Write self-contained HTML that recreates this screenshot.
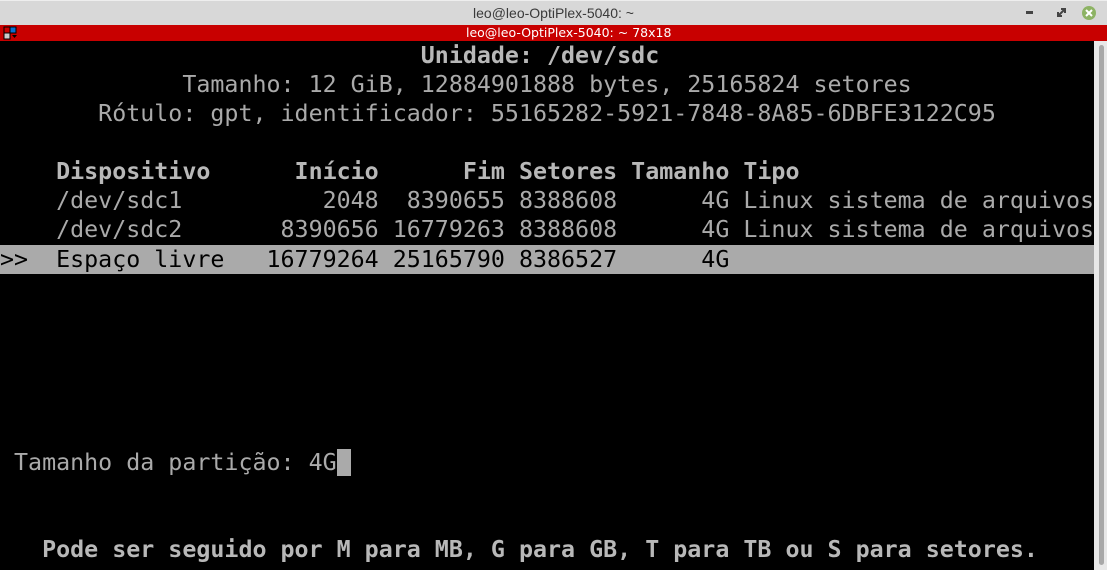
<!DOCTYPE html>
<html><head><meta charset="utf-8"><style>
html,body{margin:0;padding:0;width:1107px;height:570px;overflow:hidden;background:#000;}
#title{position:absolute;left:0;top:0;width:1107px;height:25px;background:#d8d8d8;border-top:1px solid #eee;box-sizing:border-box;font:14px "Liberation Sans","DejaVu Sans",sans-serif;color:#3a3a3a;text-align:center;line-height:24px;}
#bar{position:absolute;left:0;top:25px;width:1107px;height:16px;background:#c80000;font:12.5px "DejaVu Sans","Liberation Sans",sans-serif;color:#fff;line-height:16px;}
#bar span{position:absolute;left:466px;top:0;}
.t{position:absolute;left:0;height:29px;width:1094px;font-family:"DejaVu Sans Mono","Liberation Mono",monospace;font-size:23.3px;line-height:30px;color:#aaa;white-space:pre;margin:0;overflow:hidden;}
.b{font-weight:bold;color:#b8b8b8;}
#sb{position:absolute;left:1094px;top:41px;width:13px;height:529px;background:#e8e8e8;}
#thumb{position:absolute;left:1099px;top:45px;width:5px;height:520px;background:#a8a8a8;border-radius:3px;}
</style></head><body>
<div id="title">leo@leo-OptiPlex-5040: ~
<svg style="position:absolute;left:1026px;top:10px" width="10" height="4"><rect width="7" height="3" fill="#444"/></svg>
<svg style="position:absolute;left:1056px;top:6px" width="12" height="12"><path d="M2 9L9 2M5 2h4v4M2 5v4h4" stroke="#444" stroke-width="2" fill="none"/></svg>
<svg style="position:absolute;left:1081px;top:4px" width="16" height="16"><circle cx="8" cy="8" r="7" fill="#8db364"/><path d="M5 5L11 11M11 5L5 11" stroke="#fff" stroke-width="2"/></svg>
</div>
<div id="bar">
<svg style="position:absolute;left:3px;top:1px" width="15" height="14"><rect x="1" y="1" width="6" height="6" fill="#c00" stroke="#000"/><rect x="7" y="1" width="6" height="6" fill="#0a6fd0" stroke="#000"/><rect x="1" y="7" width="6" height="6" fill="#ccc" stroke="#000"/><path d="M9 9h5l-2.5 3z" fill="#000"/></svg>
<span>leo@leo-OptiPlex-5040: ~ 78x18</span></div>
<div class="t b" style="top:41px">                              Unidade: /dev/sdc</div>
<div class="t" style="top:70px">             Tamanho: 12 GiB, 12884901888 bytes, 25165824 setores</div>
<div class="t" style="top:99px">       Rótulo: gpt, identificador: 55165282-5921-7848-8A85-6DBFE3122C95</div>
<div class="t b" style="top:157px">    Dispositivo      Início      Fim Setores Tamanho Tipo</div>
<div class="t" style="top:186px">    /dev/sdc1          2048  8390655 8388608      4G Linux sistema de arquivos</div>
<div class="t" style="top:215px">    /dev/sdc2       8390656 16779263 8388608      4G Linux sistema de arquivos</div>
<div class="t" style="top:245px;background:#aaa;color:#000">&gt;&gt;  Espaço livre   16779264 25165790 8386527      4G</div>
<div class="t" style="top:448px"> Tamanho da partição: 4G<span style="background:#aaa"> </span></div>
<div class="t b" style="top:535px">   Pode ser seguido por M para MB, G para GB, T para TB ou S para setores.</div>
<div id="sb"></div><div id="thumb"></div>
</body></html>
